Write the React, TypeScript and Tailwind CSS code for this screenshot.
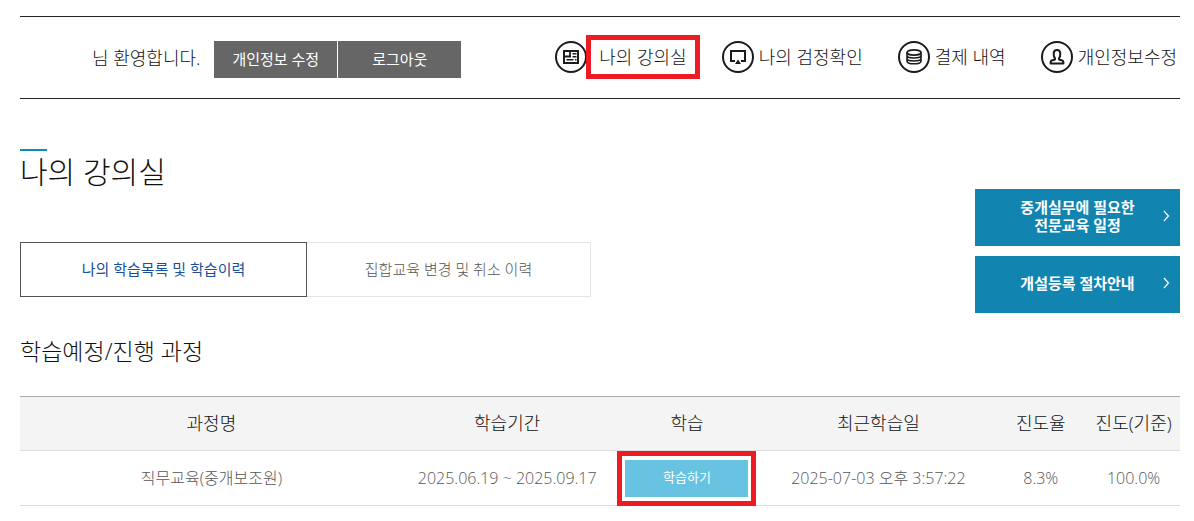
import type { ReactNode } from 'react'

const courses = [
  {
    id: 1,
    name: '직무교육(중개보조원)',
    period: '2025.06.19 ~ 2025.09.17',
    lastStudied: '2025-07-03 오후 3:57:22',
    progress: '8.3%',
    target: '100.0%',
  },
]

function CircleIcon({ children }: { children: ReactNode }) {
  return (
    <svg
      viewBox="0 0 32 32"
      className="w-8 h-8 shrink-0"
      fill="none"
      stroke="#1b1b1b"
      strokeWidth="2"
      aria-hidden="true"
    >
      <circle cx="16" cy="16" r="15" />
      {children}
    </svg>
  )
}

function LectureIcon() {
  return (
    <CircleIcon>
      <rect x="9" y="10" width="14" height="12" />
      <path d="M15 10v6M9 15.5h7" strokeWidth="1.8" />
      <path d="M17.5 12.8h4M17.5 15.8h4M11.500 18.800h7M20 18.800h1.500" strokeWidth="1.4" />
    </CircleIcon>
  )
}

function ExamIcon() {
  return (
    <CircleIcon>
      <path d="M13 20H9V10h14v10h-4" />
      <path d="M16 18.5l3 4.5h-6z" fill="#1b1b1b" stroke="none" />
    </CircleIcon>
  )
}

function PaymentIcon() {
  return (
    <CircleIcon>
      <ellipse cx="16" cy="11.5" rx="7" ry="2.7" strokeWidth="1.7" />
      <path
        d="M9 11.500v8.400c0 1.600 3.100 2.800 7 2.800s7-1.200 7-2.800v-8.400M9 14.500c0 1.400 3.100 2.500 7 2.500s7-1.100 7-2.500M9 17.500c0 1.400 3.100 2.500 7 2.500s7-1.100 7-2.500"
        strokeWidth="1.6"
      />
    </CircleIcon>
  )
}

function ProfileIcon() {
  return (
    <CircleIcon>
      <path
        d="M14 17.3c-1-1.200-1.300-2.700-1.300-4.300 0-2.600 1.200-4 3.300-4s3.300 1.400 3.300 4c0 1.600-.3 3.100-1.300 4.300v1.200l3.200 1c.8.300 1.200.8 1.200 1.600v1.400H9.600v-1.400c0-.8.4-1.300 1.200-1.600l3.200-1z"
        strokeLinejoin="round"
      />
    </CircleIcon>
  )
}

const menu = [
  { label: '나의 강의실', icon: <LectureIcon />, active: true },
  { label: '나의 검정확인', icon: <ExamIcon />, active: false },
  { label: '결제 내역', icon: <PaymentIcon />, active: false },
  { label: '개인정보수정', icon: <ProfileIcon />, active: false },
]

function Banner({ children }: { children: ReactNode }) {
  return (
    <a
      href="#"
      className="flex items-center h-[57px] pl-9 pr-2 pb-1 bg-[#1185b0] text-white text-[15px] leading-[18px] font-bold text-center"
    >
      <span className="flex-1">{children}</span>
      <svg viewBox="0 0 12 12" className="w-3 h-3 shrink-0 ml-4" fill="none" stroke="currentColor" aria-hidden="true">
        <path d="M4 1l4.5 5L4 11" strokeWidth="1.2" />
      </svg>
    </a>
  )
}

export default function App() {
  return (
    <div className="pt-4 pl-5 pr-3.5 bg-white font-light text-[#111] font-['Open_Sans','Noto_Sans_CJK_KR',sans-serif]">
      <header className="flex items-center justify-between h-[83px] border-y border-[#222] text-lg leading-6 whitespace-nowrap">
        <div className="flex items-center pl-[72px]">
          <p className="mr-3.5">님 환영합니다.</p>
          <div className="flex gap-px pt-1 text-[15px] font-normal text-white">
            <button type="button" className="w-[123px] h-[37px] pb-0.5 bg-[#666]">개인정보 수정</button>
            <button type="button" className="w-[123px] h-[37px] pb-0.5 bg-[#666]">로그아웃</button>
          </div>
        </div>
        <nav className="flex gap-[35px] pr-[3px] pb-0.5">
          {menu.map((item) => (
            <a
              key={item.label}
              href="#"
              className={`flex items-center ${item.active ? 'gap-3' : 'gap-[5px]'}`}
            >
              {item.icon}
              <span className="relative">
                {item.label}
                {item.active && <span className="absolute -inset-x-[13px] -inset-y-2.5 border-5 border-[#ed1c24]" />}
              </span>
            </a>
          ))}
        </nav>
      </header>

      <div className="flex justify-between">
        <main className="pt-[50px]">
          <div className="w-[27px] h-0.5 bg-[#0d8cb5]" />
          <h1 className="text-[30px] leading-[42px]">나의 강의실</h1>
          <div role="tablist" className="flex mt-[49px] text-[15px] whitespace-nowrap">
            <button
              type="button"
              role="tab"
              aria-selected="true"
              className="w-[287px] h-[55px] border border-[#555] font-normal text-[#1a4f9c]"
            >
              나의 학습목록 및 학습이력
            </button>
            <button
              type="button"
              role="tab"
              aria-selected="false"
              className="w-[284px] h-[55px] border border-l-0 border-[#e5e5e5] text-[#555]"
            >
              집합교육 변경 및 취소 이력
            </button>
          </div>
        </main>
        <aside className="flex flex-col gap-2.5 w-[205px] pt-[90px]">
          <Banner>
            중개실무에 필요한
            <br />
            전문교육 일정
          </Banner>
          <Banner>개설등록 절차안내</Banner>
        </aside>
      </div>

      <section>
        <h2 className="mt-5 mb-[27px] text-[23px] leading-9">학습예정/진행 과정</h2>
        <table className="w-full table-fixed border-collapse text-center whitespace-nowrap">
          <thead className="bg-[#f4f4f4] border-t border-[#aaa] text-lg leading-6">
            <tr className="h-[54px] border-b border-[#ddd]">
              <th className="w-[33%] pb-0.5 font-light">과정명</th>
              <th className="w-[18%] pb-0.5 font-light">학습기간</th>
              <th className="w-[13%] pb-0.5 font-light">학습</th>
              <th className="w-[20%] pb-0.5 font-light">최근학습일</th>
              <th className="w-[8%] pb-0.5 font-light">진도율</th>
              <th className="w-[8%] pb-0.5 font-light">진도(기준)</th>
            </tr>
          </thead>
          <tbody className="text-base text-[#555]">
            {courses.map((course) => (
              <tr key={course.id} className="h-[55px] border-b border-[#ddd]">
                <td>{course.name}</td>
                <td>{course.period}</td>
                <td>
                  <button
                    type="button"
                    className="relative block mx-auto w-[123px] h-[37px] bg-[#68c3e3] text-white text-[13px] font-normal"
                  >
                    학습하기
                    <span className="absolute -inset-x-2 -inset-y-[9px] border-5 border-[#ed1c24]" />
                  </button>
                </td>
                <td>{course.lastStudied}</td>
                <td>{course.progress}</td>
                <td>{course.target}</td>
              </tr>
            ))}
          </tbody>
        </table>
      </section>
    </div>
  )
}
